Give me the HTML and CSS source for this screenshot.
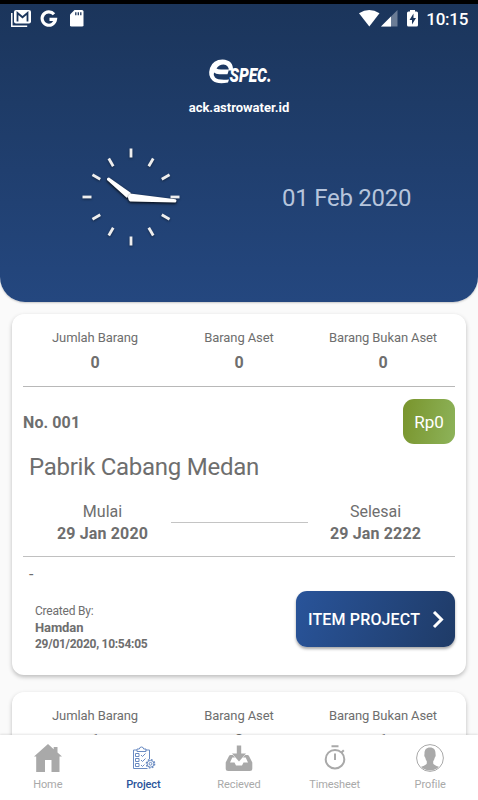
FILE: index.html
```html
<!DOCTYPE html>
<html lang="id">
<head>
<meta charset="utf-8">
<title>Project</title>
<link rel="stylesheet" href="styles.css">
</head>

<body>
<div class="app">

<header class="header">
  <div class="statusbar">
    <svg class="status-left" width="80" height="20" viewBox="0 0 80 20">
      <path d="M1.800 3v13.200h15.400" fill="none" stroke="#fff" stroke-width="1.500"/>
      <path d="M6 0h13q2 0 2 2v9.500q0 2-2 2H6q-2 0-2-2V2q0-2 2-2z" fill="#fff"/>
      <path d="M7.500 11.500V3l5 4.300L17.500 3v8.500" fill="none" stroke="#1b355b" stroke-width="1.800"/>
      <path d="M44 4.200A6.700 6.700 0 1 0 45.500 9.400H39.500" fill="none" stroke="#fff" stroke-width="3.200"/>
      <path d="M64.500 0H72q1.500 0 1.500 1.500v13.700q0 1.300-1.500 1.300H61.500q-1.500 0-1.500-1.300V4.500z" fill="#fff"/>
      <path d="M65.800 2.200v3M68.300 2.200v3M70.800 2.200v3" stroke="#1b355b" stroke-width="1.300"/>
    </svg>
    <div class="status-right">
      <svg width="62" height="18" viewBox="0 0 62 18">
        <path d="M0 3.200Q10.300-3 20.500 3.200L10.300 16.500z" fill="#fff"/>
        <path d="M38.500 0v16.500H22z" fill="#fff" opacity=".35"/>
        <path d="M32 6.500v10H22z" fill="#fff"/>
        <path d="M51 1.500V0h5v1.500h1.500q1.500 0 1.500 1.500v12q0 1.500-1.500 1.500h-8Q48 16.500 48 15V3q0-1.500 1.500-1.500z" fill="#fff"/>
        <path d="M54.500 3.500l-4 6.500H53v4.500l4-6.500h-2.500z" fill="#1b355b"/>
      </svg>
      <span class="time">10:15</span>
    </div>
  </div>

  <svg class="logo" width="68" height="30" viewBox="0 0 68 30">
    <path d="M21 14.500h4Q25.500 4 14.500 3.500Q5 3.500 2 12Q-.5 20 4.500 24.500Q9 28.500 20 26.500L21 23.500Q10 24.500 7 21.500Q5 19 6 16.500Q8 18.500 12 18.300H19.500L21 13.500H13Q10 13.500 8.500 12.500Q11 8.500 15.500 8.500Q20.500 9 21 14.500z" fill="#fff"/>
    <text x="21.500" y="26.300" class="logo-text" textLength="42" lengthAdjust="spacingAndGlyphs">SPEC.</text>
  </svg>
  <div class="domain">ack.astrowater.id</div>

  <div class="clock-row">
    <svg class="clock" width="104" height="104" viewBox="-52 -52 104 104">
      <g class="ticks">
        <path d="M0-48.500v9"/>
        <path d="M0-48.500v9" transform="rotate(30) translate(0 4)"/>
        <path d="M0-48.500v9" transform="rotate(60) translate(0 4)"/>
        <path d="M0-48.500v9" transform="rotate(90)"/>
        <path d="M0-48.500v9" transform="rotate(120) translate(0 4)"/>
        <path d="M0-48.500v9" transform="rotate(150) translate(0 4)"/>
        <path d="M0-48.500v9" transform="rotate(180)"/>
        <path d="M0-48.500v9" transform="rotate(210) translate(0 4)"/>
        <path d="M0-48.500v9" transform="rotate(240) translate(0 4)"/>
        <path d="M0-48.500v9" transform="rotate(270)"/>
        <path d="M0-48.500v9" transform="rotate(300) translate(0 4)"/>
        <path d="M0-48.500v9" transform="rotate(330) translate(0 4)"/>
      </g>
      <path class="hand" d="M0-4L-22-19.500Q-24.500-19.500-24-17L-4 1z"/>
      <path class="hand" d="M-1-3.500L44.500 2.200q2 1.700 0 3.200L-1 4.500q-4-4 0-8z"/>
    </svg>
    <div class="date">01 Feb 2020</div>
  </div>
</header>

<main class="list">
  <section class="card">
    <div class="stats">
      <div class="stat"><span>Jumlah Barang</span><b>0</b></div>
      <div class="stat"><span>Barang Aset</span><b>0</b></div>
      <div class="stat"><span>Barang Bukan Aset</span><b>0</b></div>
    </div>

    <div class="number-row">
      <b class="number">No. 001</b>
      <span class="price">Rp0</span>
    </div>

    <h2 class="title">Pabrik Cabang Medan</h2>

    <div class="period">
      <div class="period-date"><span>Mulai</span><b>29 Jan 2020</b></div>
      <div class="period-line"></div>
      <div class="period-date"><span>Selesai</span><b>29 Jan 2222</b></div>
    </div>

    <div class="note">-</div>

    <div class="bottom">
      <div class="created">
        <span class="created-by">Created By:</span>
        <b class="created-name">Hamdan</b>
        <b class="created-time">29/01/2020, 10:54:05</b>
      </div>
      <button class="item-button">
        <span>ITEM PROJECT</span>
        <svg width="12" height="18" viewBox="0 0 12 18"><path d="M2 1L9.500 8.500L2 16" fill="none" stroke="#fff" stroke-width="3"/></svg>
      </button>
    </div>
  </section>

  <section class="card">
    <div class="stats">
      <div class="stat"><span>Jumlah Barang</span><b>1</b></div>
      <div class="stat"><span>Barang Aset</span><b>0</b></div>
      <div class="stat"><span>Barang Bukan Aset</span><b>1</b></div>
    </div>
  </section>
</main>

<nav class="tabs">
  <a class="tab">
    <svg width="28" height="28" viewBox="0 0 28 28"><path d="M14 0L0 12.500h2.200V28H11V16h6.500v12h8V12.500H28L23.500 8.500V3h-3.800v2.300z" fill="#a9a9a9"/></svg>
    <span>Home</span>
  </a>
  <a class="tab active">
    <svg width="28" height="28" viewBox="0 0 28 28">
      <g fill="none" stroke="#6a8bc2" stroke-width="1">
        <path d="M8 6H4.500V24.500h14M16.500 6H20.500V15"/>
        <path d="M8 7.500V5h2.300q.2-2 2.200-2t2.200 2H17v2.500z"/>
        <path d="M6.500 9.500H10v3H6.500zM6.500 14.500H10v3H6.500zM6.500 19.500H10v3H6.500z"/>
        <path d="M12 11l1.500 1.500 3-3M12 16l1.500 1.500 3-3M12 21l1.500 1.500 2-2"/>
        <circle cx="21.500" cy="19.800" r="3.400"/>
        <circle cx="21.500" cy="19.800" r="1.400"/>
        <circle cx="21.500" cy="19.800" r="4.200" stroke-dasharray="1.650 1.650" stroke-width="1.300"/>
      </g>
    </svg>
    <span>Project</span>
  </a>
  <a class="tab">
    <svg width="28" height="28" viewBox="0 0 28 28">
      <path d="M11.800 1.500h4.400v8H21l-7 8-7-8h4.800z" fill="#a9a9a9"/>
      <path d="M5.500 11h2.300L10 13.500H7.300L5 18.500h4.500l1.500 3h6l1.500-3H23l-2.300-5H18l2.200-2.500h2.300q1 0 1.500 1L27.300 18.500v6q0 2.500-2.500 2.500H3.200Q.7 27 .7 24.500v-6L4 12q.5-1 1.500-1z" fill="#a9a9a9"/>
    </svg>
    <span>Recieved</span>
  </a>
  <a class="tab">
    <svg width="28" height="28" viewBox="0 0 28 28">
      <g fill="none" stroke="#a9a9a9" stroke-width="2">
        <circle cx="14" cy="15.200" r="9.300"/>
        <path d="M10.500 2.300h7M14 9.500v6.500M20.500 8.500l2.300-2.300"/>
      </g>
    </svg>
    <span>Timesheet</span>
  </a>
  <a class="tab">
    <svg width="28" height="28" viewBox="0 0 28 28">
      <circle cx="14" cy="14" r="13.400" fill="none" stroke="#a9a9a9" stroke-width="1"/>
      <path d="M14 3.500c4 0 5.700 2.500 5.500 6.500q.7 2-.8 3.700-.4 2.100-1.500 3.500v2.300q.4 1.500 5.700 3.300A12.500 12.500 0 0 1 5.100 22.800q5.300-1.800 5.700-3.300v-2.300q-1.100-1.400-1.500-3.500Q7.800 12 8.500 10C8.300 6 10 3.500 14 3.500z" fill="#a9a9a9"/>
    </svg>
    <span>Profile</span>
  </a>
</nav>

</div>
</body>
</html>
```
FILE: styles.css
```css
* { box-sizing:border-box; }
body { margin:0; background-color:#fafafa; font-family:Roboto, sans-serif; color:#6e6e6e; }
b { font-weight:700; }

.app { display:flex; flex-direction:column; height:800px; overflow:hidden; }

.header { flex:none; height:302px; border-top:4px solid #000; border-radius:0 0 25px 25px; background:linear-gradient(#1b355b, #24477f); color:#fff; display:flex; flex-direction:column; align-items:center; box-shadow:0 1px 2px rgba(0,0,0,.2); }
.statusbar { align-self:stretch; height:52px; padding:6px 10px 0 10px; display:flex; justify-content:space-between; align-items:flex-start; }
.status-right { display:flex; gap:5px; }
.time { font-size:17px; font-weight:500; line-height:19px; letter-spacing:-.3px; }
.logo { flex:none; margin-left:6px; overflow:visible; }
.logo-text { font-family:Roboto, sans-serif; font-size:20px; font-weight:900; font-style:italic; fill:#fff; }
.domain { margin-top:12px; font-size:13px; font-weight:700; line-height:20px; }
.clock-row { align-self:stretch; display:flex; align-items:center; margin-top:27px; padding-left:79px; }
.date { margin:2px 0 0 99px; font-size:24px; line-height:28px; letter-spacing:-.25px; color:#b7c5dc; white-space:nowrap; }
.ticks { stroke:#eee; stroke-width:2.800px; }
.clock { filter:drop-shadow(0 1px 1px rgba(0,0,0,.4)); overflow:visible; }
.hand { fill:#fff; filter:drop-shadow(0 1px 1px rgba(0,0,0,.6)); }

.list { flex:1; min-height:0; overflow:hidden; padding:12px 12px 0; }
.card { height:361px; margin-bottom:17px; padding:0 11px; border-radius:12px; background-color:#fff; box-shadow:0 2px 4px rgba(0,0,0,.25); }
.stats { display:grid; grid-template-columns:1fr 1fr 1fr; height:73px; padding-top:14px; border-bottom:1px solid #b8b8b8; text-align:center; }
.stat span { display:block; font-size:13px; line-height:20px; letter-spacing:-.1px; }
.stat b { display:block; margin-top:5px; font-size:16px; line-height:20px; }

.number-row { display:flex; justify-content:space-between; align-items:center; height:45px; margin-top:12px; }
.number { padding-top:2px; font-size:16px; letter-spacing:.1px; }
.price { width:52px; height:45px; border-radius:11px; background:linear-gradient(100deg, #79942c, #8db35a); color:#fff; font-size:17px; line-height:46px; text-align:center; }
.title { margin:9px 0 0 6px; font-size:24px; font-weight:400; line-height:28px; letter-spacing:-.27px; }

.period { display:flex; justify-content:space-between; height:76px; padding-top:20px; border-bottom:1px solid #c0c0c0; text-align:center; }
.period-date { width:136px; padding-top:1px; }
.period-date:first-child { padding-left:23px; }
.period-date:last-child { padding-right:23px; }
.period-date span { display:block; font-size:16px; line-height:20px; }
.period-date b { display:block; margin:2px -20px 0; font-size:16px; line-height:20px; letter-spacing:.15px; }
.period-line { width:137px; height:1px; margin-top:21px; background-color:#c4c4c4; }

.note { margin-left:6px; padding-top:8px; font-size:16px; line-height:20px; }
.bottom { display:flex; justify-content:space-between; margin-top:6px; }
.created { display:flex; flex-direction:column; padding:11px 0 0 12px; }
.created-by { font-size:12px; line-height:18px; letter-spacing:-.2px; }
.created-name { font-size:13px; line-height:16px; letter-spacing:-.1px; }
.created-time { font-size:12px; line-height:17px; letter-spacing:-.28px; }
.item-button { display:flex; justify-content:space-between; align-items:center; width:159px; height:56px; padding:1px 11px 0 12px; border:0; border-radius:11px; background:linear-gradient(110deg, #29549a, #1f3b67); box-shadow:0 2px 3px rgba(0,0,0,.35); color:#fff; font-family:Roboto, sans-serif; font-size:16px; font-weight:500; letter-spacing:.15px; white-space:nowrap; }

.tabs { flex:none; display:grid; grid-template-columns:repeat(5, 1fr); height:65px; padding-top:9px; background-color:#fff; box-shadow:0 -1px 2px rgba(0,0,0,.1); position:relative; }
.tab { display:flex; flex-direction:column; align-items:center; font-size:11px; line-height:14px; color:#a9a9a9; letter-spacing:-.1px; }
.tab span { margin-top:6px; }
.active { color:#29549a; font-weight:500; }
```
